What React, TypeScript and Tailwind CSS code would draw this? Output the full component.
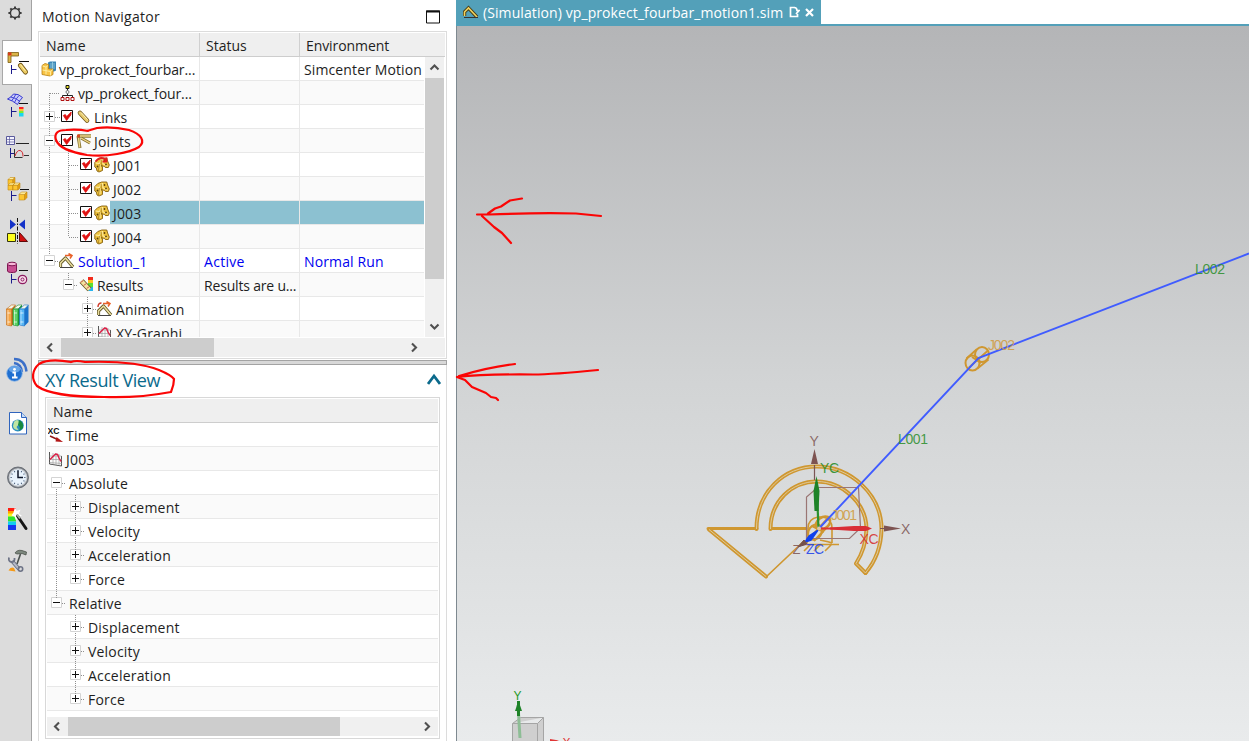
import type { ReactNode } from "react";

const NAVY = "#1c1c8c";

/* ---------- Resource bar ---------- */

function BarIcon({ top, height, children, active }: { top: number; height: number; children?: ReactNode; active?: boolean }) {
  return (
    <div className={active ? "ml-[2px] w-[30px] shrink-0 border-y border-l border-[#a8a8a8] bg-white" : "w-8 shrink-0"}>
      <svg
        className="block"
        width={active ? 29 : 32}
        height={active ? height - 2 : height}
        viewBox={active ? `3 ${top + 1} 29 ${height - 2}` : `0 ${top} 32 ${height}`}
        fill="none"
      >
        {children}
      </svg>
    </div>
  );
}

function Cube({ x, y, s }: { x: number; y: number; s: number }) {
  const d = s * 0.3;
  return (
    <g stroke="#c58a14" strokeWidth="0.6" strokeLinejoin="round">
      <path d={`M${x} ${y + d}h${s - d}v${s - d}h${-(s - d)}z`} fill="#fdc62f" />
      <path d={`M${x} ${y + d}l${d} ${-d}h${s - d}l${-d} ${d}z`} fill="#fff0a0" />
      <path d={`M${x + s - d} ${y + d}l${d} ${-d}v${s - d}l${-d} ${d}z`} fill="#e5a112" />
    </g>
  );
}

function Book({ x, a, b }: { x: number; a: string; b: string }) {
  return (
    <g>
      <path d={`M${x} 309l5-4h4l-4 4z`} fill="#f4f8ea" stroke={b} strokeWidth="0.6" />
      <path d={`M${x} 309h5v17l-5-1z`} fill={a} stroke={b} strokeWidth="0.6" />
      <path d={`M${x + 5} 309l4-4v17l-4 4z`} fill={b} />
      <path d={`M${x + 1} 313h3M${x + 1} 322h3`} stroke="#fff" strokeOpacity="0.7" />
      <path d={`M${x + 1.5} 310v15`} stroke="#fff" strokeOpacity="0.5" />
    </g>
  );
}

function ResourceBar() {
  return (
    <div className="flex h-full w-[33px] shrink-0 flex-col">
      <div className="flex h-full w-8 flex-col border-r border-[#a3a3a3] bg-[#dcdcdc]">
        <BarIcon top={0} height={40}>
          <circle cx="15" cy="13" r="4.6" stroke="#3c3c3c" strokeWidth="1.5" />
          {[0, 45, 90, 135, 180, 225, 270, 315].map((a) => (
            <path key={a} d="M15 6.4v1.9" stroke="#3c3c3c" strokeWidth="2" transform={`rotate(${a} 15 13)`} />
          ))}
        </BarIcon>
        <BarIcon top={40} height={45} active>
          <path d="M8 52.5h10.500v3.500h-7.500v6.500h-3z" fill="#d9b54a" stroke="#7a5c10" strokeWidth="0.8" />
          <path d="M8 52.500h3.500v3h-3.500z" fill="#d63a1a" />
          <path d="M11.500 65v9M11.500 69.500h5" stroke={NAVY} />
          <path d="M19 61.500h10" stroke="#111" />
          <path d="M20.500 65.500l5 6.500" stroke="#6d5215" strokeWidth="5" strokeLinecap="round" />
          <path d="M20.500 65.500l5 6.500" stroke="#eccb62" strokeWidth="3.400" strokeLinecap="round" />
          <path d="M20.500 64.500l5 6.500" stroke="#fff2b0" strokeWidth="1" />
        </BarIcon>
        <BarIcon top={85} height={42}>
          <path d="M7.500 99q3-1 6-5q5-.500 9 3.500q-3 3-5 7q-5-4-10-5.500z" fill="#c9ccfb" stroke="#3638d0" />
          <path d="M10.500 97q5 .500 9.500 4.500M16 94q-2 4-4.500 7M19 95.500q-3 3-4.500 7" stroke="#3638d0" strokeWidth="0.900" />
          <path d="M11.500 107v10M11.500 111.500h5" stroke={NAVY} />
          <path d="M19 103.500h9" stroke="#111" />
          <path d="M19 107h4.500v2h-4.500z" fill="#f22" />
          <path d="M19 109h4.500v2h-4.500z" fill="#fb3" />
          <path d="M19 111h4.500v2h-4.500z" fill="#7e3" />
          <path d="M19 113h4.500v3.500h-4.500z" fill="#19d5f0" />
        </BarIcon>
        <BarIcon top={127} height={42}>
          <path d="M6.500 136.500h8v8h-8z" fill="#f4f4ff" stroke="#5a5a9c" />
          <path d="M6.500 139.500h8M6.500 142h8M9.500 136.500v8" stroke="#5a5a9c" strokeWidth="0.700" />
          <path d="M16 143.500h13" stroke="#222" />
          <path d="M10.500 148v10M10.500 153.500h4" stroke={NAVY} />
          <path d="M14.500 149v8.500h8M24 155.500h5" stroke="#333" />
          <path d="M15 156q2-6 5-5.500t3 6" stroke="#d3252c" />
        </BarIcon>
        <BarIcon top={169} height={42}>
          <Cube x={8} y={177.500} s={7} />
          <Cube x={8} y={183} s={7} />
          <Cube x={13} y={183} s={7} />
          <path d="M11.500 191v10M11.500 195.500h5" stroke={NAVY} />
          <path d="M20 189.500h9" stroke="#111" />
          <Cube x={19} y={192} s={8} />
        </BarIcon>
        <BarIcon top={211} height={41}>
          <path d="M10 219.500v10l6-5zM25 219.500v10l-6-5z" fill="#1432c8" />
          <path d="M17.500 218v26" stroke="#111" strokeDasharray="4 1.500 1.500 1.500" />
          <path d="M7.500 233.500h8v8h-8z" fill="#ffff1e" stroke="#33330c" />
          <path d="M19.500 232.500v9h8z" fill="#d00f0f" stroke="#5c0909" />
        </BarIcon>
        <BarIcon top={252} height={42}>
          <path d="M7.500 264v7c0 2 9 2 9 0v-7z" fill="#c94f92" stroke="#7d1651" />
          <ellipse cx="12" cy="264" rx="4.500" ry="1.800" fill="#f7b7d8" stroke="#7d1651" />
          <path d="M19 270.500h9" stroke="#111" />
          <path d="M11.500 274v9.500M11.500 279.500h5" stroke={NAVY} />
          <circle cx="22.500" cy="279.500" r="4.200" fill="#f7dbea" stroke="#8c1b60" strokeWidth="1.200" />
          <circle cx="22.500" cy="279.500" r="1.500" stroke="#8c1b60" />
        </BarIcon>
        <BarIcon top={294} height={43}>
          <Book x={6.500} a="#f5a444" b="#c56a12" />
          <Book x={13} a="#5cd467" b="#1b9034" />
          <Book x={19.500} a="#55b6f6" b="#1973cb" />
        </BarIcon>
        <BarIcon top={337} height={60}>
          <path d="M14 363q7 1 8 9M14 359q11 0 12.500 12.500" stroke="#3b6fc8" strokeWidth="2.400" />
          <circle cx="14.500" cy="373.500" r="7.800" fill="#1f6fd0" stroke="#8db8ea" strokeWidth="0.800" />
          <ellipse cx="14.500" cy="369.500" rx="5.500" ry="3.200" fill="#84baf2" fillOpacity="0.700" />
          <path d="M12.500 372.500h2.500v5M12 377.500h5.500" stroke="#fff" strokeWidth="1.800" />
          <circle cx="14.500" cy="369.300" r="1.400" fill="#fff" />
        </BarIcon>
        <BarIcon top={397} height={53}>
          <path d="M9.500 412.500h12l5 5v16.500h-17z" fill="#fff" stroke="#2f64bd" />
          <path d="M21.500 412.500v5h5" fill="#c8dcf6" stroke="#2f64bd" />
          <circle cx="17.800" cy="425.500" r="6" fill="#2d8fc0" />
          <path d="M14 422q2-3 4.500-1.500l1 3-3 3.500 2 3q-5 0-5.500-4z" fill="#bfe5a2" />
          <path d="M19 420q5 2 4 8l-4 3q2-4-1-6z" fill="#188a3f" />
        </BarIcon>
        <BarIcon top={450} height={48}>
          <circle cx="18" cy="477.500" r="10.500" fill="#7d8289" stroke="#5b6068" strokeWidth="0.800" />
          <circle cx="18" cy="477.500" r="8.700" fill="#e9f3fd" stroke="#c9cdd2" strokeWidth="1.200" />
          {[0, 30, 60, 90, 120, 150, 180, 210, 240, 270, 300, 330].map((a) => (
            <path key={a} d="M18 470v1.300" stroke="#4b5f7a" transform={`rotate(${a} 18 477.500)`} />
          ))}
          <path d="M18 470.500v7h5" stroke="#10182b" strokeWidth="1.500" />
        </BarIcon>
        <BarIcon top={498} height={42}>
          <path d="M8 508h8v4h-8z" fill="#ff1d12" />
          <path d="M8 511h8v3h-8z" fill="#ffa000" />
          <path d="M8 513.500h8v3h-8z" fill="#f8f61b" />
          <path d="M8 516.500h8v5h-8z" fill="#2de52e" />
          <path d="M8 521.500h8v4h-8z" fill="#12cdf0" />
          <path d="M8 525h8v5h-8z" fill="#1538ef" />
          <path d="M15 507l1.500 4 4-1.500-1.500 4 3 2.500-4 .500-2 4-1.500-4-3-1 2-3z" fill="#fff" />
          <path d="M17.500 516l8.500 12.500" stroke="#161616" strokeWidth="3" strokeLinecap="round" />
          <path d="M17 514.500l3 4" stroke="#aaa" strokeWidth="2" />
        </BarIcon>
        <BarIcon top={540} height={42}>
          <path d="M15 553q2-3.500 7-2.500l4.500 1.500-.500 3-4-1.500-5 .500z" fill="#7d887e" stroke="#40483f" strokeWidth="0.700" />
          <path d="M20.500 554l-3.500 10" stroke="#4b5250" strokeWidth="1.600" />
          <path d="M12 561l7 8" stroke="#5f6678" strokeWidth="3.600" />
          <path d="M12 561l7 8" stroke="#b4bac8" strokeWidth="2" />
          <path d="M9 557.500q-1 4 2.500 4.500t3-4" stroke="#6d7386" strokeWidth="1.800" />
          <circle cx="20.500" cy="569" r="2.200" stroke="#6d7386" strokeWidth="1.600" />
          <path d="M8.500 570.500q2-4 5.500-2.500l1.500 3.500z" fill="#f59a18" />
        </BarIcon>
      </div>
    </div>
  );
}

/* ---------- Tree glyphs ---------- */

function Expander({ open }: { open?: boolean }) {
  return (
    <svg className="relative block shrink-0" width="11" height="11" fill="none">
      <path d="M.5.5h10v10h-10z" fill="#fff" stroke="#d4d4d4" />
      <path d="M2 5.500h7" stroke="#111" />
      {!open && <path d="M5.500 2v7" stroke="#111" />}
    </svg>
  );
}

function Check() {
  return (
    <svg className="relative block shrink-0" width="13" height="13" fill="none">
      <path d="M.5.5h11v11h-11z" fill="#fff" stroke="#111" />
      <path d="M2.300 5.500l2-1 1.400 2 4.500-4.500-.4 3-4.200 5.500z" fill="#e01010" stroke="#e01010" strokeWidth="0.800" />
    </svg>
  );
}

function Glyph({ children, w = 16 }: { children?: ReactNode; w?: number }) {
  return (
    <svg className="relative block shrink-0" width={w} height="16" viewBox={`0 0 ${w} 16`} fill="none">
      {children}
    </svg>
  );
}

const SimGlyph = () => (
  <Glyph>
    <path d="M7 1.500l2-1h6v9l-2 1h-6z" fill="#3c87b5" />
    <path d="M9 3h5M9 5h5M9 7h5M11.500 1v9" stroke="#a3d7e6" strokeWidth="0.700" />
    <path d="M1 4.500l3-2 3.500 1v4.500h4.500v5.500l-3 1.500-8-1.500z" fill="#f8c445" stroke="#b98112" strokeWidth="0.800" />
    <path d="M1.500 5l3.500 1 2-1.500M5 6v7.500M1.500 9l8 1.500 2.500-2M9.500 10.500v4" stroke="#fff0a8" strokeWidth="0.900" />
  </Glyph>
);

const AssemblyGlyph = () => (
  <Glyph w={15}>
    <path d="M7.500 4v7M2.500 12v-1.500h10v1.500" stroke="#222" />
    <path d="M6 .500h3v3h-3z" fill="#e9e12a" stroke="#111" />
    <circle cx="7.500" cy="7" r="1.500" fill="#fff" stroke="#777" />
    <path d="M1 12.500h3v3h-3zM6 12.500h3v3h-3zM11 12.500h3v3h-3z" fill="#fff" stroke="#b01010" />
  </Glyph>
);

const LinkGlyph = () => (
  <Glyph w={15}>
    <path d="M4 4l7 7.500" stroke="#6d5215" strokeWidth="4.600" strokeLinecap="round" />
    <path d="M4 4l7 7.500" stroke="#e8cc70" strokeWidth="3.200" strokeLinecap="round" />
    <path d="M5 3.500l6.500 7" stroke="#fff4bb" />
  </Glyph>
);

const JointGlyph = () => (
  <Glyph>
    <path d="M2 3l2 12" stroke="#86702c" strokeWidth="3" />
    <path d="M2.500 4l1.200 10.500" stroke="#ecd889" strokeWidth="1.500" />
    <path d="M2 3h13" stroke="#86702c" strokeWidth="3.400" />
    <path d="M3 3h12" stroke="#f0d98b" strokeWidth="1.500" />
    <path d="M5 5l9 5" stroke="#86702c" strokeWidth="3" />
    <path d="M5 5l9 5" stroke="#f0d98b" strokeWidth="1.400" />
    <path d="M1 1.500h3v3h-3z" fill="#d34a20" />
  </Glyph>
);

const RevoluteGlyph = ({ driven }: { driven?: boolean }) => (
  <Glyph>
    <path d="M.800 5.500l3-3 4-1.500h5l.800 3 1.700 4-1 2.500h-3l-1.500-1.500-1.300 1v3.500l-3.500 1.500-2-1-.700-3-1.500-1z" fill="#efc33e" stroke="#86600f" strokeWidth="0.900" strokeLinejoin="round" />
    <path d="M1.500 6l4 .500 1.500-4M6 7v6M8.500 2l.500 5 4.500 2" stroke="#fff3b4" strokeWidth="0.900" />
    <path d="M7 3l.500 6M5.500 7l-1 7" stroke="#9a7216" strokeWidth="0.700" />
    <circle cx="3.500" cy="9.500" r="0.900" fill="#5c4008" />
    <circle cx="10.500" cy="4" r="0.900" fill="#5c4008" />
    <circle cx="12" cy="7.500" r="0.900" fill="#5c4008" />
    <circle cx="8" cy="9" r="0.800" fill="#5c4008" />
    {driven && <path d="M1.500 4.500q5-6 10.500-1.500M12.500 .500v4h-4" stroke="#e02020" strokeWidth="1.800" />}
  </Glyph>
);

const SolutionGlyph = ({ x = 0 }: { x?: number }) => (
  <Glyph>
    <path d="M1.500 14v-4l5-5 7.500 9" stroke="#5e5320" strokeWidth="3.200" strokeLinejoin="round" />
    <path d="M1.500 14v-4l5-5 7.500 9" stroke="#e9dda0" strokeWidth="1.600" strokeLinejoin="round" />
    <path d="M1 14.500h13" stroke="#444" />
    <path d="M6 2.500h6M9.500 .500l3.500 2-2 3" stroke="#e8622a" strokeWidth="1.500" />
    {x > 0 && <path d="M1 6q0-4 3.500-4" stroke="#d03a2a" strokeWidth="1.400" />}
  </Glyph>
);

const ResultsGlyph = () => (
  <Glyph w={15}>
    <path d="M9 0h5v4h-5z" fill="#f22b1c" />
    <path d="M9 3h5v3.500h-5z" fill="#ffc21f" />
    <path d="M9 6h5v4h-5z" fill="#5be02e" />
    <path d="M9 10h5v4h-5z" fill="#27b4ef" />
    <path d="M2.500 4l8 8.500" stroke="#5c4c19" strokeWidth="5.400" />
    <path d="M2.500 4l8 8.500" stroke="#f4e3a0" strokeWidth="4" />
    <path d="M2 5.500l2-2M5 8.500l2-2M8 11.500l2-2" stroke="#c03030" />
  </Glyph>
);

const GraphGlyph = () => (
  <Glyph w={15}>
    <path d="M1.500 1v12l12 2v-10" stroke="#555" />
    <path d="M5 2v11.500M8 2v12M11 3v11.500M1.500 5h12M1.500 8.500h12M1.500 11.500l12 1" stroke="#a0a0a0" strokeWidth="0.700" />
    <path d="M2 8.500l2.500-2.500 3-3 2 .500 1.500 3.500 2 3.500" stroke="#dc2148" strokeWidth="1.500" />
  </Glyph>
);

const TimeGlyph = () => (
  <Glyph>
    <text x="-0.500" y="6.500" fontSize="8.500" fontWeight="700" textLength="12" lengthAdjust="spacingAndGlyphs" fill="#111" fontFamily="Liberation Sans, sans-serif">XC</text>
    <path d="M2 9l7 3.200" stroke="#8e1717" strokeWidth="1.500" />
    <path d="M8.500 10l6.500 5-7.500-.600z" fill="#b31717" />
  </Glyph>
);

function Chevron({ dir }: { dir: "left" | "right" | "up" | "down" }) {
  const d = {
    left: "M8 2.500l-4 4 4 4",
    right: "M5 2.500l4 4-4 4",
    up: "M2.500 8.500l4-4 4 4",
    down: "M2.500 4.500l4 4 4-4",
  }[dir];
  return (
    <svg width="13" height="13" fill="none" className="block">
      <path d={d} stroke="#505050" strokeWidth="2.100" />
    </svg>
  );
}

/* ---------- Motion navigator ---------- */

type NavRow = {
  pad: string;
  open?: boolean;
  expander?: boolean;
  check?: boolean;
  icon: ReactNode;
  label: string;
  track?: string;
  gap: string;
  status?: string;
  env?: string;
  selected?: boolean;
  blue?: boolean;
};

const navRows: NavRow[] = [
  { pad: "pl-[1px]", icon: <SimGlyph />, label: "vp_prokect_fourbar...", gap: "pl-[2px]", env: "Simcenter Motion", track: "tracking-[-0.08px]" },
  { pad: "pl-[20px]", icon: <AssemblyGlyph />, label: "vp_prokect_four...", gap: "pl-[3px]", track: "tracking-[-0.12px]" },
  { pad: "pl-[4px]", expander: true, check: true, icon: <LinkGlyph />, label: "Links", gap: "pl-[3px]", track: "tracking-[-0.1px]" },
  { pad: "pl-[4px]", expander: true, open: true, check: true, icon: <JointGlyph />, label: "Joints", gap: "pl-[2px]" },
  { pad: "pl-[40px]", check: true, icon: <RevoluteGlyph driven />, label: "J001", gap: "pl-[3px]" },
  { pad: "pl-[40px]", check: true, icon: <RevoluteGlyph />, label: "J002", gap: "pl-[3px]" },
  { pad: "pl-[40px]", check: true, icon: <RevoluteGlyph />, label: "J003", gap: "pl-[3px]", selected: true },
  { pad: "pl-[40px]", check: true, icon: <RevoluteGlyph />, label: "J004", gap: "pl-[3px]" },
  { pad: "pl-[4px]", expander: true, open: true, icon: <SolutionGlyph />, label: "Solution_1", gap: "pl-[3px]", status: "Active", env: "Normal Run", blue: true },
  { pad: "pl-[23px]", expander: true, open: true, icon: <ResultsGlyph />, label: "Results", gap: "pl-[3px]", status: "Results are u...", track: "tracking-[-0.1px]" },
  { pad: "pl-[42px]", expander: true, icon: <SolutionGlyph x={1} />, label: "Animation", gap: "pl-[3px]" },
  { pad: "pl-[42px]", expander: true, icon: <GraphGlyph />, label: "XY-Graphi", gap: "pl-[4px]" },
];

function NavigatorRow({ row, odd }: { row: NavRow; odd: boolean }) {
  const cell = row.selected ? "bg-[#8cc1d1]" : "";
  return (
    <div className={`flex h-6 w-full shrink-0 border-b border-[#e8e8e8] ${odd ? "bg-[#fafafa]" : "bg-white"} ${row.blue ? "text-[#0000f0]" : ""}`}>
      <div className={`flex h-full w-[160px] shrink-0 items-center border-r border-[#e8e8e8] ${row.pad}`}>
        {row.expander && <Expander open={row.open} />}
        {row.expander && <span className={row.check ? "w-[6px]" : row.label === "Results" ? "w-[5px]" : "w-[4px]"} />}
        {row.check && <Check />}
        {row.check && <span className={row.expander ? "w-[2px]" : "w-[1px]"} />}
        {row.icon}
        <span className={`flex h-full min-w-0 flex-1 items-center whitespace-nowrap pt-[3px] ${row.gap} ${row.track ?? "tracking-[0.15px]"} ${cell}`}>{row.label}</span>
      </div>
      <div className={`flex h-full w-[100px] shrink-0 items-center whitespace-nowrap border-r border-[#e8e8e8] pl-1 pt-[3px] ${row.track ? "tracking-[-0.18px]" : "tracking-[0.3px]"} ${cell}`}>{row.status}</div>
      <div className={`flex h-full flex-1 items-center whitespace-nowrap pl-1 pt-[3px] tracking-[0.12px] ${cell}`}>{row.env}</div>
    </div>
  );
}

function Navigator() {
  return (
    <div className="flex h-[359px] shrink-0 flex-col">
      <div className="flex h-[31px] shrink-0 items-center justify-between pl-[4px] pr-[7px] pt-[3px]">
        <span className="tracking-[0.28px]">Motion Navigator</span>
        <svg width="14" height="14" fill="none" className="block">
          <path d="M.5 1h13v12h-13z" stroke="#111" />
          <path d="M0 1.500h14" stroke="#111" strokeWidth="2" />
        </svg>
      </div>
      <div className="flex h-[328px] flex-col border border-[#dcdcdc] p-px">
        <div className="flex h-6 shrink-0 border-b border-[#cdcdcd] bg-[#efefef]">
          <div className="flex w-[160px] items-center border-r border-[#d0d0d0] pl-[6px] pt-[2px] tracking-[0.15px]">Name</div>
          <div className="flex w-[100px] items-center border-r border-[#d0d0d0] pl-[6px] pt-[2px]">Status</div>
          <div className="flex items-center pl-[6px] pt-[2px] tracking-[-0.08px]">Environment</div>
        </div>
        <div className="flex h-[280px] shrink-0">
          <div className="relative flex w-[384px] shrink-0 flex-col overflow-hidden">
            {navRows.map((r, i) => (
              <NavigatorRow key={i} row={r} odd={i % 2 === 1} />
            ))}
            <svg className="pointer-events-none absolute left-0 top-0" width="100" height="280" viewBox="40 57 100 280" fill="none" stroke="#8f8f8f" strokeDasharray="1 1">
              <path d="M49.500 93v19M49.500 123v13M49.500 147v108M50 93.500h9M55 117.500h5M55 141.500h5M55 261.500h4" />
              <path d="M68.500 149v88M69 165.500h9M69 189.500h9M69 213.500h9M69 237.500h9" />
              <path d="M68.500 273v7M74 285.500h4M87.500 297v7M87.500 315v13M93 309.500h4M93 333.500h4" />
            </svg>
          </div>
          <div className="ml-px flex w-[19px] flex-col items-center bg-[#f0f0f0]">
            <div className="flex h-[21px] items-center"><Chevron dir="up" /></div>
            <div className="h-[201px] w-full bg-[#cdcdcd]" />
            <div className="mt-auto flex h-[21px] items-center"><Chevron dir="down" /></div>
          </div>
        </div>
        <div className="mt-px flex h-5 items-center bg-[#f0f0f0]">
          <div className="flex w-[21px] justify-center pr-px"><Chevron dir="left" /></div>
          <div className="h-[19px] w-[153px] bg-[#cdcdcd]" />
          <div className="ml-[193px]"><Chevron dir="right" /></div>
        </div>
      </div>
    </div>
  );
}

/* ---------- XY result view ---------- */

const resultRows = [
  { level: 0, label: "Time", icon: <TimeGlyph /> },
  { level: 0, label: "J003", icon: <GraphGlyph /> },
  { level: 1, label: "Absolute" },
  { level: 2, label: "Displacement" },
  { level: 2, label: "Velocity" },
  { level: 2, label: "Acceleration" },
  { level: 2, label: "Force" },
  { level: 1, label: "Relative" },
  { level: 2, label: "Displacement" },
  { level: 2, label: "Velocity" },
  { level: 2, label: "Acceleration" },
  { level: 2, label: "Force" },
];

function ResultView() {
  return (
    <div className="flex h-[376px] flex-col border-x border-[#dcdcdc] px-[6px]">
      <div className="flex h-8 shrink-0 items-center justify-between pr-px text-[18px] tracking-[-0.42px] text-[#0b6a8c]">
        <span className="pb-[2px]">XY Result View</span>
        <svg width="14" height="12" fill="none" className="mt-[-5px] block -mr-[2px]">
          <path d="M1 11l6-8 6 8" stroke="#0b6a8c" strokeWidth="2.800" />
        </svg>
      </div>
      <div className="flex h-[342px] flex-col border border-[#d8d8d8] px-px pt-px">
        <div className="flex h-6 shrink-0 items-center border-b border-[#cdcdcd] bg-[#efefef] pl-[6px] pt-[2px] tracking-[0.15px]">Name</div>
        <div className="relative flex flex-col">
          {resultRows.map((r, i) => (
            <div
              key={i}
              className={`flex h-6 items-center whitespace-nowrap border-b border-[#e8e8e8] ${i % 2 ? "bg-[#fafafa]" : "bg-white"} ${
                r.level === 0 ? "pl-[1px]" : r.level === 1 ? "pl-[4px]" : "pl-[23px]"
              }`}
            >
              {r.level === 0 ? r.icon : <Expander open={r.level === 1} />}
              <span className={`pt-[3px] tracking-[0.2px] ${r.label === "J003" ? "pl-[3px]" : r.level === 0 ? "pl-[2px]" : "pl-[7px]"}`}>{r.label}</span>
            </div>
          ))}
          <svg className="pointer-events-none absolute left-0 top-0" width="100" height="288" viewBox="47 423 100 288" fill="none" stroke="#8f8f8f" strokeDasharray="1 1">
            <path d="M56.500 489v109M62 483.500h4M62 603.500h4" />
            <path d="M75.500 495v7M75.500 513v13M75.500 537v13M75.500 561v13M75.500 615v7M75.500 633v13M75.500 657v13M75.500 681v13" />
            <path d="M81 507.500h4M81 531.500h4M81 555.500h4M81 579.500h4M81 627.500h4M81 651.500h4M81 675.500h4M81 699.500h4" />
          </svg>
        </div>
        <div className="mt-[6px] flex h-[19px] shrink-0 items-center bg-[#f0f0f0]">
          <div className="flex w-[21px] justify-center pr-px"><Chevron dir="left" /></div>
          <div className="h-full w-[272px] bg-[#cdcdcd]" />
          <div className="ml-auto mr-[5px]"><Chevron dir="right" /></div>
        </div>
      </div>
    </div>
  );
}

/* ---------- Graphics window ---------- */

const OUTER_ARC = "M756.500 529C756.500 492 784 466.500 817 466.500S881.500 494 881.500 529Q881 555 865.500 573";
const INNER_ARC = "M770.500 529C770.500 501 792 481.500 817 481.500S866.500 503 866.500 529Q866 548 856 563.500L865.500 573";
const WEDGE = "M709 529.500L766 576.500";

function Scene() {
  return (
    <svg className="block" width="791" height="715" viewBox="458 26 791 715" fill="none" fontFamily="Liberation Sans, sans-serif" fontSize="14">
      <g stroke="#cf9730" strokeLinejoin="round" strokeLinecap="round">
        <path d={OUTER_ARC} strokeWidth="4" />
        <path d={INNER_ARC} strokeWidth="4" />
        <path d={WEDGE} strokeWidth="4" />
        <path d="M708 528.500h49M771 528.500h35" strokeWidth="3" />
        <path d="M766 577l38-36" strokeWidth="1.700" />
      </g>
      <g stroke="#dfcfa8" strokeWidth="0.900">
        <path d={OUTER_ARC} />
        <path d={INNER_ARC} />
        <path d={WEDGE} />
      </g>
      <g stroke="#cf9730" strokeLinejoin="round">
        <path d="M808 540v-12q0-9 10-11h5q9 2 9 11v15M808 540l-2 5M820 540q10 2 12 3M802 544.500h37M804 551l6-6M814 551l7-7M825 551l7-7" strokeWidth="1.600" />
        <ellipse cx="823" cy="523" rx="8" ry="5.500" transform="rotate(-35 823 523)" strokeWidth="2.400" />
        <ellipse cx="815" cy="532" rx="6.500" ry="8" transform="rotate(35 815 532)" strokeWidth="2.200" />
        <path d="M810 538l17-19M814 541l16-17M812 526l12 6" strokeWidth="2" />
        <ellipse cx="972.500" cy="363" rx="7" ry="7.500" strokeWidth="2" />
        <ellipse cx="982" cy="354.500" rx="7" ry="7.500" strokeWidth="2" />
        <path d="M966.500 358.500l10-9M977.500 368.500l11-9M969 367.500l19-17M972 357l9 6" strokeWidth="1.800" />
      </g>
      <g stroke="#9a7674" strokeWidth="1.200">
        <path d="M806.500 539v-42l11-9.500h41l2 40.500-11 10.500h-43" />
        <path d="M814.500 465v15M880 528.500h8" stroke="#7b5554" />
      </g>
      <path d="M814.500 449l3.500 15h-7zM901 528.500l-17-3v6z" fill="#7d5351" />
      <path d="M816.500 482l2 46" stroke="#2c922e" strokeWidth="2.200" />
      <path d="M816.500 476l3 15-1 20h-4l-1-20z" fill="#1e8328" />
      <path d="M820 528.500h20" stroke="#e13434" strokeWidth="2" />
      <path d="M872 528.500l-6-2.500h-12l-24 1.500v2l24 1.500h12z" fill="#d92e36" />
      <path d="M818 530l-9 6-4 6 6-2z" fill="#1040ee" stroke="#1040ee" strokeWidth="1.500" />
      <path d="M798 547l6-7 3 4z" fill="#74504c" stroke="#74504c" />
      <path d="M819 528.500L978.500 358 1249 253.500" stroke="#405cff" strokeWidth="1.900" />
      <circle cx="819" cy="528.500" r="2" fill="#dec7a6" />
      <g fillOpacity="0.88">
        <text x="809.500" y="446" fill="#805856">Y</text>
        <text x="901" y="534" fill="#805856">X</text>
        <text x="792.500" y="554" fill="#805856" fontSize="13">Z</text>
        <text x="820" y="473" fill="#258c28" textLength="19">YC</text>
        <text x="859.500" y="544" fill="#d63030" textLength="19">XC</text>
        <text x="806" y="554" fill="#2043e8" textLength="18">ZC</text>
        <text x="831" y="520" fill="#cf9b42" textLength="26">J001</text>
        <text x="988" y="350" fill="#cf9b42" textLength="27">J002</text>
        <text x="898" y="444" fill="#2f8f30" textLength="30">L001</text>
        <text x="1195" y="274" fill="#2f8f30" textLength="30">L002</text>
      </g>
      <path d="M512.500 723.500l8-6h23v24h-31zM512.500 723.500h25l6-6M537.500 723.500v18" fill="#cfcfcf" stroke="#a5a5a5" />
      <path d="M518 705l2 33" stroke="#8dbd95" strokeWidth="3" />
      <path d="M518.500 701l3.500 10h-7z" fill="#1e8328" />
      <path d="M518.500 701v15" stroke="#1e8328" strokeWidth="3" />
      <text x="513.500" y="700" fill="#259a28" fontSize="12">Y</text>
      <path d="M550 739l9 1.500-9 2z" fill="#e03636" />
      <text x="562.500" y="747" fill="#e03636" fontSize="12">X</text>
    </svg>
  );
}

function GraphicsWindow() {
  return (
    <div className="flex h-full min-w-0 flex-1 flex-col">
      <div className="flex h-6 shrink-0 bg-white">
        <div className="flex w-[365px] items-center bg-[#53a0b9] pl-[7px] text-white">
          <svg width="16" height="14" fill="none" className="block shrink-0">
            <path d="M1.500 11V7l4-4 8.500 9" stroke="#463b15" strokeWidth="3.400" />
            <path d="M1.500 11V7l4-4 8.500 9" stroke="#f2d45f" strokeWidth="1.600" />
            <path d="M1 12.500h14" stroke="#333" />
          </svg>
          <span className="whitespace-nowrap pl-[4px] pt-[2px] tracking-[0.09px]">(Simulation) vp_prokect_fourbar_motion1.sim</span>
          <svg width="11" height="12" fill="none" className="ml-[6px] block shrink-0">
            <path d="M6 1.500H1.500v9h7V8M5 1.500q3 0 3 3h2L7 8" stroke="#fff" strokeWidth="1.700" />
          </svg>
          <svg width="9" height="9" fill="none" className="ml-[5px] block shrink-0">
            <path d="M1 1l7 7M8 1L1 8" stroke="#fff" strokeWidth="2.200" />
          </svg>
        </div>
      </div>
      <div className="h-[2px] shrink-0 bg-[#53a0b9]" />
      <div className="min-h-0 flex-1 overflow-hidden border-l border-[#7e8990] bg-linear-to-b from-[#b4b5b7] via-[#d2d4d5] to-[#e9ebec] pl-px">
        <Scene />
      </div>
    </div>
  );
}

/* ---------- Hand-drawn marks ---------- */

function Marks() {
  return (
    <svg className="pointer-events-none absolute left-0 top-0" width="1249" height="741" fill="none" stroke="#fb0505" strokeWidth="2.200" strokeLinecap="round" strokeLinejoin="round">
      <path d="M88 131q-10-2-22-1c-9 0-12 4-10 10 3 8 14 12 31 15 21 2 42-2 52-8 7-6 2-13-10-17q-17-4-32-2l-10 3" />
      <path d="M71 362q-22-4-32 2c-7 6-8 15-2 22 11 8 36 11 67 11 26 1 51-2 67-5q3-7 3-13-3-4-15-9c-18-7-44-9-74-8q-9-2-14 0" />
      <path d="M477 214.500h12q51-2 87-1l25 2.500M488 213.500l7-5 6-2 9-6 12-2M482 216l12 11 8 6 9 10" />
      <path d="M457 377q27-3 76-2.500 20 0 65-4.500M459 376q30-9 56-12M457 377l8 3 7 7 14 6 5 4 5 1 2 2" />
    </svg>
  );
}

export default function App() {
  return (
    <div className="relative flex h-[741px] w-[1249px] overflow-hidden bg-white font-['Open_Sans','Noto_Sans',sans-serif] text-[14px] leading-[20px] text-[#1e1e1e]">
      <ResourceBar />
      <div className="ml-[5px] mr-[9px] flex w-[409px] shrink-0 flex-col">
        <Navigator />
        <div className="mt-px h-[5px] shrink-0 border border-[#a3a3a3] bg-[#d8d8d8]" />
        <ResultView />
      </div>
      <GraphicsWindow />
      <Marks />
    </div>
  );
}
